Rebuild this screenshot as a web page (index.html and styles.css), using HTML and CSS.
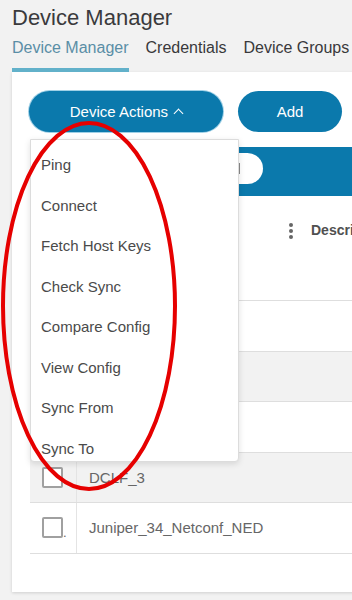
FILE: index.html
```html
<!DOCTYPE html>
<html lang="en">
<head>
    <meta charset="UTF-8">
    <meta name="viewport" content="width=device-width, initial-scale=1.0">
    <title>Device Manager</title>
    <link rel="stylesheet" href="styles.css">
</head>
<body>
    <div class="page">
        <h1 class="title">Device Manager</h1>
        <div class="tabs">
            <span class="tab active">Device Manager</span>
            <span class="tab">Credentials</span>
            <span class="tab">Device Groups</span>
        </div>

        <div class="card">
            <div class="toolbar">
                <button class="btn btn-actions">Device Actions <span class="caret"></span></button>
                <button class="btn btn-add">Add</button>

                <ul class="dropdown">
                    <li>Ping</li>
                    <li>Connect</li>
                    <li>Fetch Host Keys</li>
                    <li>Check Sync</li>
                    <li>Compare Config</li>
                    <li>View Config</li>
                    <li>Sync From</li>
                    <li>Sync To</li>
                </ul>
            </div>

            <div class="table">
                <div class="table-bar">
                    <div class="search"><span class="cursor"></span></div>
                </div>
                <div class="table-head">
                    <span class="kebab">
                        <i></i><i></i><i></i>
                    </span>
                    <span class="col-title">Description</span>
                </div>
                <div class="row"><div class="cell-check"><span class="checkbox"></span></div><div class="cell-name">DCLF_0</div></div>
                <div class="row alt"><div class="cell-check"><span class="checkbox"></span></div><div class="cell-name">DCLF_1</div></div>
                <div class="row"><div class="cell-check"><span class="checkbox"></span></div><div class="cell-name">DCLF_2</div></div>
                <div class="row alt"><div class="cell-check"><span class="checkbox"></span></div><div class="cell-name">DCLF_3</div></div>
                <div class="row"><div class="cell-check"><span class="checkbox"></span><span class="dot">.</span></div><div class="cell-name">Juniper_34_Netconf_NED</div></div>
            </div>
        </div>
    </div>

    <!-- annotation drawn over the screenshot -->
    <svg class="mark" width="352" height="600" viewBox="0 0 352 600">
        <ellipse cx="89" cy="306" rx="86" ry="183" fill="none" stroke="#e60000" stroke-width="4"/>
    </svg>
</body>
</html>
```

FILE: styles.css
```css
* {
    margin: 0;
    padding: 0;
    box-sizing: border-box;
}

body {
    font-family: 'Liberation Sans', Arial, sans-serif;
    background: #f2f2f2;
    color: #39393b;
    width: 352px;
    height: 600px;
    overflow: hidden;
    position: relative;
}

.page {
    padding-left: 12px;
}

.title {
    font-size: 22px;
    font-weight: normal;
    line-height: 26px;
    padding-top: 5px;
    color: #3a3a3c;
}

.tabs {
    display: flex;
    gap: 17px;
    margin-top: 4px;
    white-space: nowrap;
}

.tab {
    font-size: 16px;
    line-height: 20px;
    padding-top: 3px;
    padding-bottom: 10px;
    border-bottom: 4px solid transparent;
    color: #39393b;
}

.tab.active {
    color: #5a8ea6;
    border-bottom-color: #62b1ca;
}

.card {
    background: #fff;
    width: 360px;
    height: 520px;
    box-shadow: 0 1px 3px rgba(0, 0, 0, 0.15);
    padding: 19px 0 0 18px;
}

.toolbar {
    position: relative;
    display: flex;
    gap: 15px;
}

.btn {
    height: 41px;
    border-radius: 21px;
    border: none;
    background: #0b79ac;
    color: #fff;
    font-family: 'Liberation Sans', Arial, sans-serif;
    font-size: 15px;
}

.btn-actions {
    width: 194px;
    margin-left: -1px;
    box-shadow: 0 0 0 1px #9fd0e6;
}

.btn-add {
    width: 104px;
}

.caret {
    display: inline-block;
    width: 7px;
    height: 7px;
    border-left: 1.5px solid #fff;
    border-top: 1.5px solid #fff;
    transform: rotate(45deg);
    margin-left: 3px;
}

.dropdown {
    position: absolute;
    left: 0;
    top: 48px;
    width: 209px;
    height: 323px;
    list-style: none;
    background: #fff;
    border: 1px solid #dcdcdc;
    border-radius: 0 0 4px 4px;
    box-shadow: 0 2px 6px rgba(0, 0, 0, 0.12);
    padding-top: 5px;
    z-index: 2;
}

.dropdown li {
    height: 40.5px;
    line-height: 40.5px;
    padding-left: 10px;
    font-size: 15px;
    color: #4a4a4a;
}

.table {
    margin-top: 15px;
}

.table-bar {
    height: 49px;
    background: #0b79ac;
    padding: 6px 0 0 40px;
}

.search {
    width: 193px;
    height: 31px;
    border-radius: 16px;
    background: #fff;
    display: flex;
    align-items: center;
    padding-left: 168px;
}

.cursor {
    width: 2px;
    height: 11px;
    background: #8a8a8a;
}

.table-head {
    height: 105px;
    display: flex;
    align-items: flex-start;
    padding: 26px 0 0 259px;
    border-bottom: 1px solid #dedede;
    gap: 18px;
    white-space: nowrap;
}

.kebab {
    display: flex;
    flex-direction: column;
    gap: 2px;
    padding-top: 1px;
}

.kebab i {
    width: 4px;
    height: 4px;
    border-radius: 50%;
    background: #666;
}

.col-title {
    font-size: 14px;
    font-weight: bold;
    color: #505050;
}

.row {
    display: flex;
    height: 50.5px;
    border-bottom: 1px solid #dedede;
}

.row.alt {
    background: #f2f2f2;
}

.cell-check {
    width: 47px;
    border-right: 1px solid #e4e4e4;
    display: flex;
    align-items: center;
    padding-left: 12px;
}

.checkbox {
    width: 21px;
    height: 21px;
    border: 2px solid #a0a0a0;
    border-radius: 2px;
    background: #fff;
}

.dot {
    font-size: 13px;
    color: #666;
    margin-top: 10px;
}

.cell-name {
    padding-left: 12px;
    line-height: 49px;
    font-size: 15px;
    color: #666;
    white-space: nowrap;
}

.mark {
    position: absolute;
    left: 0;
    top: 0;
    pointer-events: none;
    z-index: 5;
}
```
